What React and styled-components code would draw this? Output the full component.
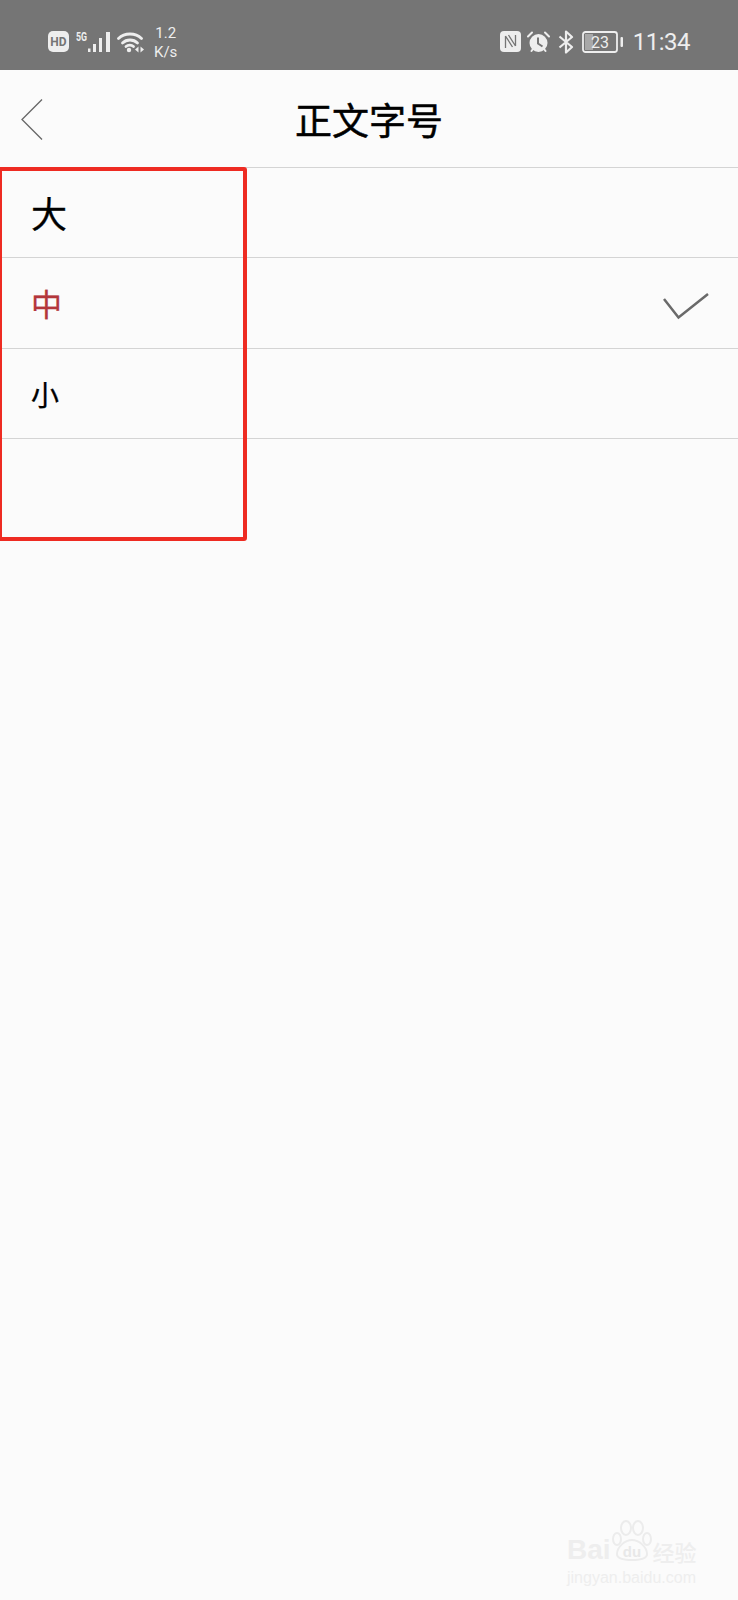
import React from 'react'
import styled, { createGlobalStyle } from 'styled-components'

const GlobalStyle = createGlobalStyle`
  html, body { margin: 0; padding: 0; background: #fbfbfb; }
  body { font-family: "Noto Sans CJK SC", "Liberation Sans", sans-serif; }
`

const sizes = [
  { label: '大', size: 36, tone: '#000', nudge: -2 },
  { label: '中', size: 31, tone: '#b3363b', nudge: 0, picked: true },
  { label: '小', size: 28, tone: '#000', nudge: 1 },
]

const Page = styled.div`
  position: relative;
  width: 738px;
  height: 1600px;
  background: #fbfbfb;
  overflow: hidden;
`

const StatusBar = styled.div`
  height: 70px;
  box-sizing: border-box;
  background: #757575;
  color: #eee;
  padding: 0 48px;
  display: flex;
  align-items: center;
  justify-content: space-between;
  font-family: Roboto, "Liberation Sans", sans-serif;
`

const StatusGroup = styled.div`
  display: flex;
  align-items: center;
  gap: ${(p) => p.$gap}px;
  margin-top: 13px;
`

const Speed = styled.div`
  font-size: 15px;
  line-height: 19px;
  text-align: center;
  margin-left: 4px;
  margin-top: 2px;
`

const Clock = styled.div`
  font-size: 24px;
  line-height: 28px;
  letter-spacing: -0.5px;
  margin-left: 1px;
`

const Header = styled.div`
  height: 98px;
  box-sizing: border-box;
  border-bottom: 1px solid #d4d4d4;
  display: flex;
  align-items: center;
  justify-content: center;
  position: relative;
`

const BackIcon = styled.svg`
  position: absolute;
  left: 20px;
  top: 28px;
`

const Title = styled.h1`
  margin: 0;
  font-size: 37px;
  font-weight: 400;
  -webkit-text-stroke: 0.5px #000;
  color: #000;
  line-height: 46px;
`

const Row = styled.div`
  height: 90.3px;
  box-sizing: border-box;
  border-bottom: 1px solid #d4d4d4;
  padding: 0 29px 0 31px;
  display: flex;
  align-items: center;
  justify-content: space-between;
`

const RowLabel = styled.span`
  font-size: ${(p) => p.$size}px;
  color: ${(p) => p.$tone};
  -webkit-text-stroke: 0.3px ${(p) => p.$tone};
  line-height: 1;
  margin-top: ${(p) => p.$nudge}px;
`

const Check = styled.svg`
  margin-top: 6px;
`

const Highlight = styled.div`
  position: absolute;
  left: -2px;
  top: 167px;
  width: 241px;
  height: 366px;
  border: 4px solid #ee2b22;
  border-radius: 3px;
  pointer-events: none;
`

const Watermark = styled.div`
  position: absolute;
  left: 567px;
  top: 1520px;
  width: 134px;
  color: #eeeeee;
`

const Brand = styled.div`
  display: flex;
  align-items: flex-end;
  font-family: "Liberation Sans", sans-serif;
  font-size: 28px;
  font-weight: 700;
  line-height: 30px;
  padding-top: 15px;
`

const BrandCn = styled.span`
  font-size: 22px;
  font-weight: 500;
  font-family: "Noto Sans CJK SC", sans-serif;
  margin-left: 42px;
  line-height: 28px;
  white-space: nowrap;
`

const BrandUrl = styled.div`
  font-family: "Liberation Sans", sans-serif;
  font-size: 16px;
  line-height: 20px;
  margin-top: 3px;
  white-space: nowrap;
`

const Paw = styled.svg`
  position: absolute;
  left: 44px;
  top: 0;
`

const HdIcon = () => (
  <svg width="21" height="21" viewBox="0 0 21 21">
    <rect width="21" height="21" rx="5" fill="#eee" />
    <text x="10.5" y="15" textAnchor="middle" fontSize="12" fontWeight="700" fontFamily="Roboto" fill="#757575">HD</text>
  </svg>
)

const SignalIcon = () => (
  <svg width="35" height="26" viewBox="0 -4 35 26" style={{ marginLeft: 1, marginTop: -4 }}>
    <text x="0" y="10" fontSize="13" fontWeight="700" fontFamily="Roboto" fill="#eee" textLength="11" lengthAdjust="spacingAndGlyphs">5G</text>
    <rect x="12" y="17.500" width="2.500" height="3.500" fill="#eee" />
    <rect x="17" y="13" width="3" height="8" fill="#eee" />
    <rect x="23" y="7" width="3" height="14" fill="#eee" />
    <rect x="30" y="1" width="4" height="20" fill="#eee" />
  </svg>
)

const WifiIcon = () => (
  <svg width="27" height="22" viewBox="0 0 27 22" fill="none" stroke="#eee" strokeWidth="2.8" strokeLinecap="round">
    <path d="M1.5 7.5C7.5 1.5 18.5 1.5 24.5 7.5" />
    <path d="M5.5 12C9.5 8 16.5 8 20.5 12" />
    <path d="M9 15.5C11 13.6 14.5 13.6 16.5 15.5" />
    <circle cx="12" cy="19" r="2.2" fill="#eee" stroke="none" />
    <path d="M18 18.5l3.500-3v6z" fill="#eee" stroke="none" />
    <path d="M27 18.500l-3.500-3v6z" fill="#eee" stroke="none" />
  </svg>
)

const NfcIcon = () => (
  <svg width="21" height="21" viewBox="0 0 21 21" style={{ marginRight: -2 }}>
    <rect width="21" height="21" rx="4" fill="#eee" />
    <path d="M5.500 17V5M5.500 5l7 11M8.500 4l7 11M15.500 15V4" fill="none" stroke="#757575" strokeWidth="1.300" />
  </svg>
)

const AlarmIcon = () => (
  <svg width="23" height="22" viewBox="0 0 23 22">
    <circle cx="11.500" cy="12" r="9" fill="#eee" />
    <path d="M11 6.500v6l4.500 3" fill="none" stroke="#757575" strokeWidth="2" />
    <path d="M1 5.500L5 1.500M22 5.500L18 1.500M4.500 20l1.500-2M18.500 20l-1.500-2" stroke="#eee" strokeWidth="2" strokeLinecap="round" />
  </svg>
)

const BluetoothIcon = () => (
  <svg width="16" height="24" viewBox="0 0 16 24" fill="none" stroke="#eee" strokeWidth="2.200">
    <path d="M1.500 6.500L14 17l-6 5.500V1.500l6 5.500L1.500 17.500" strokeLinejoin="round" />
  </svg>
)

const BatteryIcon = () => (
  <svg width="42" height="22" viewBox="0 0 42 22">
    <rect x="1" y="1" width="34" height="20" rx="2.500" fill="none" stroke="#eee" strokeWidth="1.800" />
    <rect x="3" y="3" width="8" height="16" fill="#a8a8a8" />
    <text x="18" y="17" textAnchor="middle" fontSize="16" fontFamily="Roboto" fill="#eee">23</text>
    <rect x="38.500" y="6" width="2.500" height="10" rx="1" fill="#eee" />
  </svg>
)

const App = () => {
  return (
    <Page>
      <GlobalStyle />
      <StatusBar>
        <StatusGroup $gap={6}>
          <HdIcon />
          <SignalIcon />
          <WifiIcon />
          <Speed>1.2<br />K/s</Speed>
        </StatusGroup>
        <StatusGroup $gap={8}>
          <NfcIcon />
          <AlarmIcon />
          <BluetoothIcon />
          <BatteryIcon />
          <Clock>11:34</Clock>
        </StatusGroup>
      </StatusBar>
      <Header>
        <BackIcon width="24" height="44" viewBox="0 0 24 44" fill="none" stroke="#666" strokeWidth="1.300">
          <path d="M22 1.500L2 21.500l20 20" />
        </BackIcon>
        <Title>正文字号</Title>
      </Header>
      {sizes.map((item) => (
        <Row key={item.label}>
          <RowLabel $size={item.size} $tone={item.tone} $nudge={item.nudge}>{item.label}</RowLabel>
          {item.picked && (
            <Check width="46" height="28" viewBox="0 0 46 28" fill="none" stroke="#6a6a6a" strokeWidth="2.500">
              <path d="M1 7l14.500 18.500L45 2" />
            </Check>
          )}
        </Row>
      ))}
      <Highlight />
      <Watermark>
        <Paw width="42" height="42" viewBox="0 0 42 42" fill="#fbfbfb" stroke="#ececec" strokeWidth="2">
          <ellipse cx="6" cy="19" rx="4" ry="6" />
          <ellipse cx="15" cy="8" rx="5" ry="7" />
          <ellipse cx="27" cy="8" rx="5" ry="7" />
          <ellipse cx="36" cy="19" rx="4" ry="6" />
          <path d="M6 34c0-7 8-14 15-14s15 7 15 14c0 4-6 6-15 6s-15-2-15-6z" />
          <text x="21" y="37" textAnchor="middle" fontSize="15" fontWeight="700" fontFamily="Liberation Sans" fill="#e8e8e8" stroke="none">du</text>
        </Paw>
        <Brand>Bai<BrandCn>经验</BrandCn></Brand>
        <BrandUrl>jingyan.baidu.com</BrandUrl>
      </Watermark>
    </Page>
  )
}

export default App
